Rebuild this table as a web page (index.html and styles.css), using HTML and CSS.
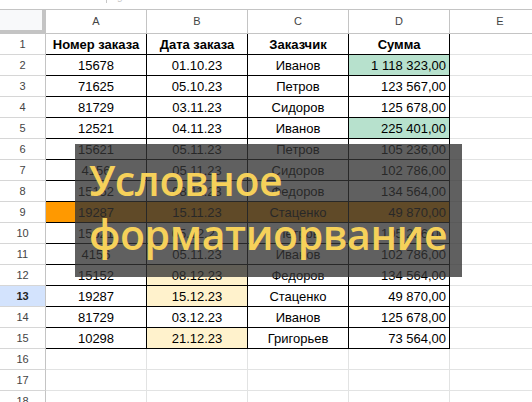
FILE: index.html
```html
<!DOCTYPE html>
<html lang="ru">
<head>
<meta charset="utf-8">
<title>Условное форматирование</title>
<link rel="stylesheet" href="styles.css">
</head>
<body>
<div class="page">
  <div class="topbar"><span class="tick"></span><span class="ghost">g22</span></div>
  <div class="sheet">
    <div class="corner"></div>
    <div class="ch">A</div><div class="ch">B</div><div class="ch">C</div><div class="ch">D</div><div class="ch">E</div>

    <div class="rh">1</div>
    <div class="t ctr b">Номер заказа</div><div class="t ctr b">Дата заказа</div><div class="t ctr b">Заказчик</div><div class="t ctr b">Сумма</div><div class="c"></div>

    <div class="rh">2</div>
    <div class="t ctr">15678</div><div class="t ctr">01.10.23</div><div class="t ctr">Иванов</div><div class="t sum grn">1 118 323,00</div><div class="c"></div>

    <div class="rh">3</div>
    <div class="t ctr">71625</div><div class="t ctr">05.10.23</div><div class="t ctr">Петров</div><div class="t sum">123 567,00</div><div class="c"></div>

    <div class="rh">4</div>
    <div class="t ctr">81729</div><div class="t ctr">03.11.23</div><div class="t ctr">Сидоров</div><div class="t sum">125 678,00</div><div class="c"></div>

    <div class="rh">5</div>
    <div class="t ctr">12521</div><div class="t ctr">04.11.23</div><div class="t ctr">Иванов</div><div class="t sum grn">225 401,00</div><div class="c"></div>

    <div class="rh">6</div>
    <div class="t ctr">15621</div><div class="t ctr">05.11.23</div><div class="t ctr">Петров</div><div class="t sum">105 236,00</div><div class="c"></div>

    <div class="rh">7</div>
    <div class="t ctr">4156</div><div class="t ctr">05.11.23</div><div class="t ctr">Сидоров</div><div class="t sum">102 786,00</div><div class="c"></div>

    <div class="rh">8</div>
    <div class="t ctr">15152</div><div class="t ctr">08.11.23</div><div class="t ctr">Федоров</div><div class="t sum">134 564,00</div><div class="c"></div>

    <div class="rh">9</div>
    <div class="t ctr org">19287</div><div class="t ctr org">15.11.23</div><div class="t ctr org">Стаценко</div><div class="t sum org">49 870,00</div><div class="c"></div>

    <div class="rh">10</div>
    <div class="t ctr">15621</div><div class="t ctr">05.12.23</div><div class="t ctr">Петров</div><div class="t sum">105 236,00</div><div class="c"></div>

    <div class="rh">11</div>
    <div class="t ctr">4156</div><div class="t ctr">05.11.23</div><div class="t ctr">Иванов</div><div class="t sum">102 786,00</div><div class="c"></div>

    <div class="rh">12</div>
    <div class="t ctr">15152</div><div class="t ctr yel">08.12.23</div><div class="t ctr">Федоров</div><div class="t sum">134 564,00</div><div class="c"></div>

    <div class="rh sel">13</div>
    <div class="t ctr">19287</div><div class="t ctr yel">15.12.23</div><div class="t ctr">Стаценко</div><div class="t sum">49 870,00</div><div class="c"></div>

    <div class="rh">14</div>
    <div class="t ctr">81729</div><div class="t ctr">03.12.23</div><div class="t ctr">Иванов</div><div class="t sum">125 678,00</div><div class="c"></div>

    <div class="rh">15</div>
    <div class="t ctr">10298</div><div class="t ctr yel">21.12.23</div><div class="t ctr">Григорьев</div><div class="t sum">73 564,00</div><div class="c"></div>

    <div class="rh">16</div>
    <div class="c"></div><div class="c"></div><div class="c"></div><div class="c"></div><div class="c"></div>

    <div class="rh">17</div>
    <div class="c"></div><div class="c"></div><div class="c"></div><div class="c"></div><div class="c"></div>

    <div class="rh">18</div>
    <div class="c"></div><div class="c"></div><div class="c"></div><div class="c"></div><div class="c"></div>
  </div>
  <div class="banner">Условное<br>форматиорвание</div>
</div>
</body>
</html>
```

FILE: styles.css
```css
* { box-sizing: border-box; }
html, body {
  margin: 0;
  padding: 0;
  background: #fff;
  overflow: hidden;
}
body {
  width: 532px;
  height: 402px;
  font-family: "Liberation Sans", Arial, sans-serif;
}
.page {
  position: relative;
  width: 532px;
  height: 402px;
  overflow: hidden;
}
.topbar {
  height: 10px;
  border-bottom: 1px solid #c4c4c4;
  display: flex;
  align-items: flex-start;
  overflow: hidden;
}
.tick {
  width: 1px;
  height: 3px;
  background: #c8c8c8;
  margin-left: 106px;
}
.ghost {
  margin-left: 10px;
  margin-top: -8px;
  font-size: 10px;
  line-height: 10px;
  color: #c6c6c6;
}
.sheet {
  display: grid;
  grid-template-columns: 46px repeat(5, 101px);
  grid-template-rows: 24px repeat(18, 21px);
  width: 551px;
}
.corner {
  background: #f8f9fa;
  border-right: 4px solid #c4c4c4;
  border-bottom: 4px solid #c4c4c4;
}
.ch {
  border-right: 1px solid #c4c4c4;
  border-bottom: 1px solid #c4c4c4;
  text-align: center;
  font-size: 11px;
  line-height: 23px;
  color: #444;
}
.rh {
  border-right: 1px solid #c4c4c4;
  border-bottom: 1px solid #d6d6d6;
  text-align: center;
  font-size: 11px;
  line-height: 20px;
  color: #444;
}
.rh.sel {
  background: #d3e3fd;
  font-weight: bold;
  color: #1f1f1f;
}
.c {
  border-right: 1px solid #e2e3e3;
  border-bottom: 1px solid #e2e3e3;
}
.t {
  border-right: 1px solid #000;
  border-bottom: 1px solid #000;
  font-size: 13px;
  line-height: 20px;
  padding: 1px 3px 0;
  color: #000;
  white-space: nowrap;
  overflow: hidden;
}
.ctr { text-align: center; }
.sum { text-align: right; }
.b { font-weight: bold; }
.org { background: #ff9900; }
.yel { background: #fff2cc; }
.grn { background: #b7e1cd; }
.banner {
  position: absolute;
  left: 75px;
  top: 144px;
  width: 387px;
  height: 133px;
  background: rgba(51, 51, 51, 0.78);
  color: #f6d15a;
  font-family: "Open Sans", "Noto Sans", sans-serif;
  font-size: 41px;
  font-weight: 600;
  letter-spacing: -0.4px;
  line-height: 54px;
  padding: 9px 0 0 14px;
  white-space: nowrap;
}
```
